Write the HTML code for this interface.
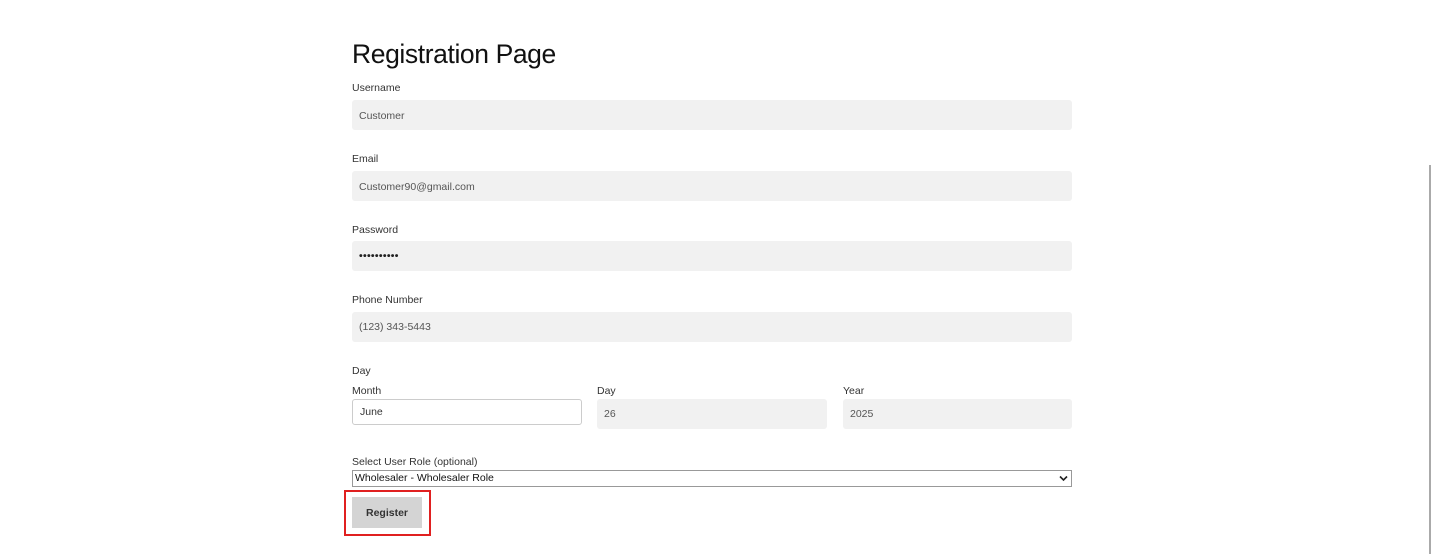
<!DOCTYPE html>
<html><head><style>
body{margin:0;width:1431px;height:554px;background:#fff;font-family:"Liberation Sans",sans-serif;color:#222;position:relative;overflow:hidden}
.a{position:absolute}
h1{position:absolute;left:352px;top:39px;margin:0;font-size:26.5px;font-weight:normal;color:#111;letter-spacing:-0.4px}
.l{position:absolute;font-size:10.5px;color:#333}
.i{position:absolute;background:#f1f1f1;border-radius:3px;font-size:10.5px;color:#555;box-sizing:border-box;padding-left:7px;display:flex;align-items:center}
</style></head><body>
<h1>Registration Page</h1>
<div class="l" style="left:352px;top:82px">Username</div>
<div class="i" style="left:352px;top:100px;width:720px;height:30px;padding-top:2px">Customer</div>
<div class="l" style="left:352px;top:153px">Email</div>
<div class="i" style="left:352px;top:171px;width:720px;height:30px;padding-top:2px">Customer90@gmail.com</div>
<div class="l" style="left:352px;top:224px">Password</div>
<div class="i" style="left:352px;top:241px;width:720px;height:30px;color:#222;font-weight:bold;letter-spacing:0.3px">••••••••••</div>
<div class="l" style="left:352px;top:294px">Phone Number</div>
<div class="i" style="left:352px;top:312px;width:720px;height:30px">(123) 343-5443</div>
<div class="l" style="left:352px;top:365px">Day</div>
<div class="l" style="left:352px;top:385px">Month</div>
<div class="l" style="left:597px;top:385px">Day</div>
<div class="l" style="left:843px;top:385px">Year</div>
<div class="i" style="left:352px;top:399px;width:230px;height:26px;background:#fff;border:1px solid #ccc;color:#333">June</div>
<div class="i" style="left:597px;top:399px;width:230px;height:30px">26</div>
<div class="i" style="left:843px;top:399px;width:229px;height:30px">2025</div>
<div class="l" style="left:352px;top:456px">Select User Role (optional)</div>
<div class="a" style="left:352px;top:470px;width:720px;height:17px;box-sizing:border-box;border:1px solid #999;font-size:10.5px;color:#111;padding-left:2px;line-height:15px">Wholesaler - Wholesaler Role
<svg class="a" style="right:3px;top:4px" width="9" height="7" viewBox="0 0 9 7"><path d="M1 1.5l3.5 3.5 3.5-3.5" stroke="#222" stroke-width="1.6" fill="none"/></svg></div>
<div class="a" style="left:344px;top:490px;width:83px;height:42px;border:2px solid #e02020"></div>
<div class="a" style="left:352px;top:497px;width:70px;height:31px;background:#d4d4d4;font-size:10.5px;font-weight:bold;color:#333;display:flex;align-items:center;justify-content:center">Register</div>
<div class="a" style="left:1429px;top:165px;width:1.5px;height:389px;background:#aaa"></div>
</body></html>
